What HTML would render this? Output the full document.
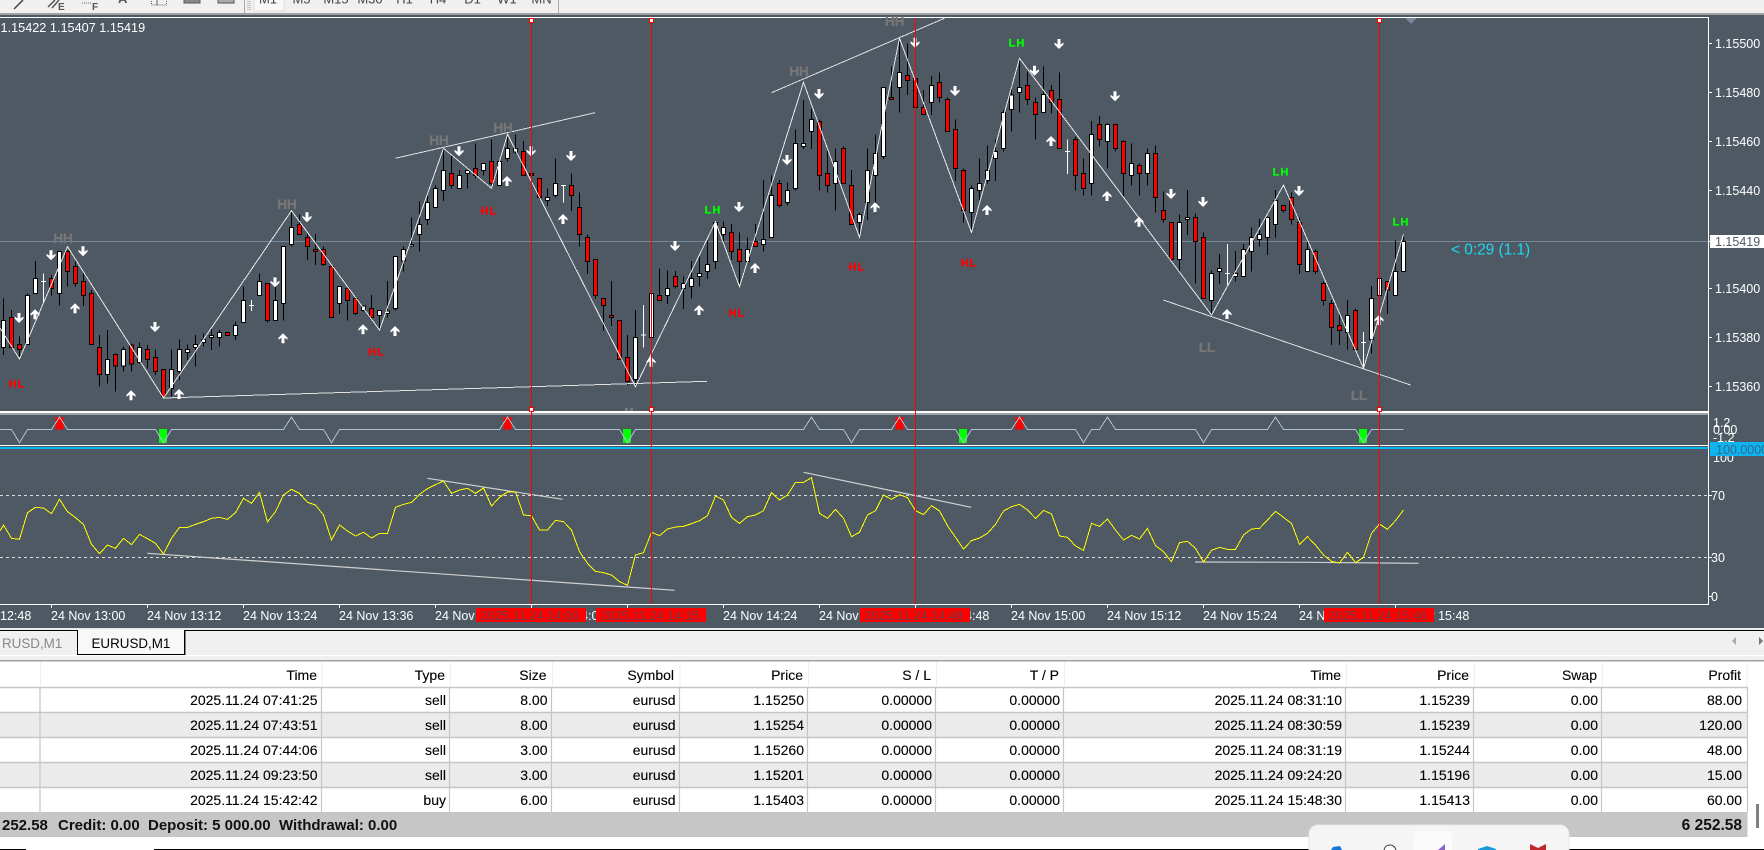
<!DOCTYPE html>
<html><head><meta charset="utf-8"><title>EURUSD,M1</title>
<style>
html,body{margin:0;padding:0;width:1764px;height:850px;overflow:hidden;background:#fff}
svg{display:block;font-family:"Liberation Sans",sans-serif}
.n{vector-effect:non-scaling-stroke}
.ax{font-size:12.5px;fill:#fff}
.tb text{font-size:14px;fill:#000;text-anchor:end;stroke:#000;stroke-width:.12}
.ft{font-size:15px;font-weight:bold;fill:#111}
.lb{font-weight:bold;text-anchor:middle}
.tf{font-size:13px;fill:#444;text-anchor:middle}
</style></head><body>
<svg width="1764" height="850" viewBox="0 0 1764 850" xmlns="http://www.w3.org/2000/svg">
<!-- toolbar -->
<rect width="1764" height="14" fill="#f0f0f0"/>
<rect y="13" width="1764" height="2" fill="#a0a0a0"/>
<path d="M14 9L23 0" stroke="#444" stroke-width="1.5" fill="none"/>
<path d="M48 7L55 0M52 8L59 0" stroke="#555" stroke-width="1.5" fill="none"/>
<text x="58" y="10" font-size="10" font-weight="bold" fill="#555">E</text>
<path d="M82 3H92" stroke="#666" stroke-dasharray="1 1" fill="none"/>
<text x="92" y="10" font-size="10" font-weight="bold" fill="#555">F</text>
<text x="118" y="3" font-size="13" font-weight="bold" fill="#555">A</text>
<rect x="151.5" y="-4" width="15" height="9" fill="none" stroke="#666" stroke-dasharray="1 1"/>
<path d="M157 0V5" stroke="#666"/>
<rect x="184" y="-6" width="16" height="9" fill="#888" stroke="#555"/>
<rect x="218" y="-6" width="16" height="9" fill="#aaa" stroke="#555"/>
<path d="M244.500 0V13M558.500 0V13" stroke="#aaa"/>
<path d="M248 1v10M250 1v10" stroke="#999" stroke-dasharray="1 1"/>
<rect x="254" y="-1" width="30" height="12" fill="#f8f8f8" stroke="#ddd"/>
<g class="tf"><text x="268" y="3.500" class="tf">M1</text><text x="301.500" y="3.500" class="tf">M5</text><text x="336" y="3.500" class="tf">M15</text><text x="370" y="3.500" class="tf">M30</text><text x="404.500" y="3.500" class="tf">H1</text><text x="438" y="3.500" class="tf">H4</text><text x="472.500" y="3.500" class="tf">D1</text><text x="507" y="3.500" class="tf">W1</text><text x="541.500" y="3.500" class="tf">MN</text></g>

<!-- chart bg -->
<rect y="15" width="1764" height="613" fill="#4e5964"/>
<!-- frames -->
<path d="M0 17.500H1708.500V604.500H0M0 445.500H1708.500" fill="none" stroke="#fff" shape-rendering="crispEdges"/>
<rect y="411" width="1708" height="2" fill="#fff"/>
<rect y="413.500" width="1708" height="1" fill="#f0f0f0"/>
<path d="M0 241.500H1708" stroke="#778899" shape-rendering="crispEdges"/>
<path d="M1411 24L1405 18H1417z" fill="#778899"/>

<!-- candles -->
<g transform="scale(1 .33333)" shape-rendering="crispEdges">
<path class="n" fill="none" stroke="#000" d="M3.500 895V1065M11.500 930V1045M19.500 1010V1078M27.500 880V1035M35.500 783V880M51.500 825V887M59.500 755V917M67.500 750V860M75.500 785V860M83.500 820V918M91.500 870V1033M99.500 1005V1160M107.500 990V1150M115.500 1060V1175M123.500 1040V1115M131.500 1030V1115M139.500 1027V1090M147.500 1035V1105M155.500 1048V1125M163.500 1108V1195M171.500 1048V1190M179.500 1018V1140M187.500 1033V1080M195.500 1005V1100M203.500 1000V1040M211.500 985V1050M219.500 990V1040M227.500 997V1006M235.500 966V1020M243.500 860V967M259.500 820V886M267.500 851V968M275.500 830V962M283.500 740V962M291.500 632V740M299.500 643V705M307.500 702V780M315.500 702V795M323.500 740V798M331.500 800V952M339.500 860V942M347.500 862V962M355.500 890V945M363.500 915V935M371.500 885V955M379.500 932V990M387.500 843V952M395.500 770V932M403.500 740V815M411.500 652V738M419.500 605V755M427.500 585V675M435.500 555V622M443.500 445V603M451.500 465V565M459.500 510V565M467.500 510V565M475.500 430V535M483.500 490V527M491.500 418V555M499.500 480V556M507.500 405V485M515.500 403V460M523.500 423V527M531.500 440V540M539.500 535V597M547.500 565V618M555.500 475V593M571.500 520V633M579.500 577V740M587.500 703V822M595.500 779V895M603.500 896V992M611.500 843V978M619.500 962V1078M627.500 1005V1155M635.500 930V1155M659.500 805V902M667.500 812V912M675.500 813V865M683.500 830V927M691.500 783V896M699.500 770V860M707.500 722V837M715.500 665V807M723.500 665V725M731.500 672V780M739.500 697V857M747.500 712V785M755.500 672V740M763.500 540V755M771.500 527V712M779.500 540V623M787.500 548V617M795.500 388V572M803.500 300V447M811.500 327V447M819.500 358V572M827.500 450V578M835.500 445V632M843.500 440V551M851.500 510V673M859.500 637V707M867.500 445V660M875.500 403V640M883.500 263V477M891.500 200V298M899.500 115V338M907.500 130V285M915.500 155V322M923.500 270V344M931.500 228V345M939.500 217V307M947.500 292V394M955.500 358V543M963.500 505V668M971.500 557V695M979.500 475V600M987.500 437V550M995.500 418V543M1003.500 330V455M1011.500 255V395M1019.500 178V338M1027.500 215V315M1035.500 292V418M1043.500 200V338M1051.500 255V340M1059.500 217V445M1075.500 410V572M1083.500 475V587M1091.500 363V587M1099.500 348V440M1107.500 370V505M1115.500 370V455M1123.500 420V590M1131.500 430V557M1139.500 490V587M1147.500 445V557M1155.500 437V638M1163.500 575V668M1171.500 668V778M1179.500 643V818M1187.500 570V705M1195.500 640V850M1203.500 697V895M1211.500 812V945M1219.500 762V852M1235.500 753V845M1243.500 732V829M1251.500 682V815M1259.500 657V740M1267.500 650V765M1275.500 570V713M1283.500 617V638M1291.500 577V673M1299.500 652V822M1307.500 725V814M1315.500 748V822M1323.500 845V917M1331.500 900V1035M1339.500 945V1035M1347.500 900V1048M1355.500 925V1048M1371.500 858V1060M1379.500 836V886M1387.500 845V942M1395.500 722V886M1403.500 703V814"/>
<path class="n" fill="none" stroke="#fff" d="M43.500 820V910M41 845H46M251.500 900V933M249 917H254M563.500 557V608M561 557H566M643.500 915V1043M641 1005H646M1067.500 418V522M1065 455H1070M1227.500 732V855M1225 820H1230M1363.500 996V1100M1361 1027H1366"/>
<path class="n" fill="#fff" stroke="#000" d="M1.500 962h4V1042h-4zM25.500 886h4V1033h-4zM33.500 835h4V880h-4zM57.500 755h4V880h-4zM105.500 1078h4V1123h-4zM121.500 1048h4V1098h-4zM137.500 1042h4V1087h-4zM169.500 1108h4V1165h-4zM177.500 1048h4V1115h-4zM185.500 1048h4V1058h-4zM193.500 1034h4V1042h-4zM201.500 1018h4V1027h-4zM209.500 1006h4V1012h-4zM217.500 997h4V1012h-4zM233.500 976h4V1006h-4zM241.500 902h4V967h-4zM257.500 845h4V886h-4zM273.500 902h4V962h-4zM281.500 740h4V910h-4zM289.500 683h4V733h-4zM337.500 860h4V910h-4zM361.500 918h4V932h-4zM377.500 932h4V946h-4zM385.500 933h4V940h-4zM393.500 770h4V926h-4zM401.500 748h4V783h-4zM409.500 734h4V738h-4zM417.500 674h4V703h-4zM425.500 608h4V658h-4zM433.500 566h4V622h-4zM441.500 512h4V572h-4zM457.500 527h4V565h-4zM465.500 512h4V520h-4zM481.500 490h4V512h-4zM497.500 485h4V556h-4zM505.500 446h4V476h-4zM513.500 446h4V456h-4zM545.500 593h4V601h-4zM553.500 551h4V587h-4zM633.500 1012h4V1138h-4zM649.500 880h4V1012h-4zM665.500 866h4V886h-4zM681.500 851h4V866h-4zM689.500 836h4V860h-4zM697.500 821h4V830h-4zM705.500 794h4V815h-4zM713.500 668h4V785h-4zM721.500 683h4V704h-4zM745.500 748h4V785h-4zM761.500 719h4V733h-4zM769.500 587h4V712h-4zM785.500 572h4V607h-4zM793.500 431h4V566h-4zM801.500 431h4V440h-4zM809.500 358h4V394h-4zM833.500 485h4V551h-4zM857.500 644h4V667h-4zM865.500 512h4V607h-4zM873.500 461h4V527h-4zM881.500 263h4V470h-4zM897.500 218h4V263h-4zM929.500 257h4V307h-4zM969.500 566h4V637h-4zM977.500 551h4V572h-4zM985.500 512h4V541h-4zM993.500 455h4V475h-4zM1001.500 338h4V445h-4zM1009.500 285h4V329h-4zM1017.500 263h4V277h-4zM1041.500 284h4V337h-4zM1089.500 404h4V551h-4zM1105.500 374h4V424h-4zM1129.500 491h4V527h-4zM1145.500 461h4V521h-4zM1177.500 668h4V778h-4zM1185.500 652h4V658h-4zM1209.500 820h4V902h-4zM1217.500 806h4V814h-4zM1233.500 821h4V829h-4zM1241.500 748h4V829h-4zM1249.500 712h4V754h-4zM1257.500 704h4V718h-4zM1265.500 652h4V712h-4zM1273.500 601h4V673h-4zM1305.500 748h4V814h-4zM1345.500 946h4V998h-4zM1369.500 895h4V1018h-4zM1377.500 836h4V886h-4zM1393.500 814h4V886h-4zM1401.500 725h4V814h-4z"/>
<path class="n" fill="#f00" stroke="#000" d="M9.500 952h4V1042h-4zM17.500 1034h4V1048h-4zM49.500 836h4V865h-4zM65.500 755h4V815h-4zM73.500 800h4V850h-4zM81.500 845h4V886h-4zM89.500 880h4V1033h-4zM97.500 1042h4V1123h-4zM113.500 1064h4V1098h-4zM129.500 1035h4V1092h-4zM145.500 1048h4V1078h-4zM153.500 1072h4V1115h-4zM161.500 1108h4V1190h-4zM225.500 997h4V1006h-4zM265.500 851h4V962h-4zM297.500 673h4V704h-4zM305.500 712h4V740h-4zM313.500 748h4V754h-4zM321.500 748h4V794h-4zM329.500 800h4V952h-4zM345.500 866h4V902h-4zM353.500 896h4V940h-4zM369.500 926h4V952h-4zM449.500 521h4V557h-4zM473.500 506h4V527h-4zM489.500 485h4V551h-4zM521.500 455h4V527h-4zM529.500 521h4V527h-4zM537.500 535h4V592h-4zM569.500 557h4V587h-4zM577.500 622h4V704h-4zM585.500 712h4V785h-4zM593.500 779h4V887h-4zM601.500 896h4V917h-4zM609.500 946h4V952h-4zM617.500 962h4V1078h-4zM625.500 1072h4V1144h-4zM657.500 886h4V902h-4zM673.500 830h4V860h-4zM729.500 698h4V754h-4zM737.500 748h4V785h-4zM753.500 725h4V740h-4zM777.500 551h4V617h-4zM817.500 365h4V527h-4zM825.500 521h4V557h-4zM841.500 446h4V551h-4zM849.500 557h4V673h-4zM889.500 292h4V298h-4zM905.500 227h4V241h-4zM913.500 235h4V322h-4zM921.500 323h4V344h-4zM937.500 248h4V292h-4zM945.500 298h4V394h-4zM953.500 388h4V505h-4zM961.500 512h4V632h-4zM1025.500 257h4V298h-4zM1033.500 308h4V344h-4zM1049.500 272h4V308h-4zM1057.500 298h4V445h-4zM1073.500 419h4V527h-4zM1081.500 521h4V565h-4zM1097.500 374h4V418h-4zM1113.500 374h4V445h-4zM1121.500 425h4V521h-4zM1137.500 497h4V521h-4zM1153.500 461h4V592h-4zM1161.500 632h4V658h-4zM1169.500 668h4V778h-4zM1193.500 652h4V725h-4zM1201.500 712h4V895h-4zM1281.500 617h4V632h-4zM1289.500 593h4V658h-4zM1297.500 668h4V793h-4zM1313.500 755h4V815h-4zM1321.500 851h4V901h-4zM1329.500 910h4V982h-4zM1337.500 976h4V991h-4zM1353.500 932h4V1048h-4zM1385.500 845h4V870h-4z"/>
</g>

<!-- zigzag + trendlines -->
<g fill="none" shape-rendering="crispEdges">
<path stroke="#e8e8e8" d="M0 328L19.500 359L67.500 246.700L163.500 398L291.500 210.700L379.500 330L443.500 148.300L491.500 188.300L507.500 134.300L635.500 386.700L715.500 221.700L739.500 286.700L803.500 82.300L859.500 237.300L899.500 38.300L971.500 232.300L1019.500 58.300L1211.500 315L1283.500 185L1363.500 368.300L1403.500 234.300"/>
<path stroke="#e0e0e0" d="M395.300 158.300L595 112.700M163.500 398L707 381.300M771.500 92.700L944.400 18.300M1163.300 300L1410.500 385"/>
</g>

<!-- arrows -->
<g fill="#fff">
<path d="M19 323l4.500-4.500v-2l-3 2v-5.500h-3v5.500l-3-2v2zM51 260.300l4.500-4.500v-2l-3 2v-5.500h-3v5.500l-3-2v2zM83 256.300l4.500-4.500v-2l-3 2v-5.500h-3v5.500l-3-2v2zM155 332l4.500-4.500v-2l-3 2v-5.500h-3v5.500l-3-2v2zM275 287.300l4.500-4.500v-2l-3 2v-5.500h-3v5.500l-3-2v2zM307 222.300l4.500-4.500v-2l-3 2v-5.500h-3v5.500l-3-2v2zM459 156.300l4.500-4.500v-2l-3 2v-5.500h-3v5.500l-3-2v2zM531 156.300l4.500-4.500v-2l-3 2v-5.500h-3v5.500l-3-2v2zM571 161l4.500-4.500v-2l-3 2v-5.500h-3v5.500l-3-2v2zM675 251l4.500-4.500v-2l-3 2v-5.500h-3v5.500l-3-2v2zM739 212l4.500-4.500v-2l-3 2v-5.500h-3v5.500l-3-2v2zM787 165l4.500-4.500v-2l-3 2v-5.500h-3v5.500l-3-2v2zM819 99l4.500-4.500v-2l-3 2v-5.500h-3v5.500l-3-2v2zM915 47.700l4.500-4.500v-2l-3 2v-5.500h-3v5.500l-3-2v2zM955 96l4.500-4.500v-2l-3 2v-5.500h-3v5.500l-3-2v2zM1034.500 75.700l4.500-4.500v-2l-3 2v-5.500h-3v5.500l-3-2v2zM1059 49l4.500-4.500v-2l-3 2v-5.500h-3v5.500l-3-2v2zM1115 101.300l4.500-4.500v-2l-3 2v-5.500h-3v5.500l-3-2v2zM1171 199l4.500-4.500v-2l-3 2v-5.500h-3v5.500l-3-2v2zM1203 207l4.500-4.500v-2l-3 2v-5.500h-3v5.500l-3-2v2zM1299 196l4.500-4.500v-2l-3 2v-5.500h-3v5.500l-3-2v2z"/>
<path d="M35 309.300l4.500 4.500v2l-3-2v5.500h-3v-5.500l-3 2v-2zM75 303.300l4.500 4.500v2l-3-2v5.500h-3v-5.500l-3 2v-2zM131 390.300l4.500 4.500v2l-3-2v5.500h-3v-5.500l-3 2v-2zM179 389l4.500 4.500v2l-3-2v5.500h-3v-5.500l-3 2v-2zM283 333.300l4.500 4.500v2l-3-2v5.500h-3v-5.500l-3 2v-2zM363 324.300l4.500 4.500v2l-3-2v5.500h-3v-5.500l-3 2v-2zM395 326l4.500 4.500v2l-3-2v5.500h-3v-5.500l-3 2v-2zM507 176l4.500 4.500v2l-3-2v5.500h-3v-5.500l-3 2v-2zM563 214l4.500 4.500v2l-3-2v5.500h-3v-5.500l-3 2v-2zM651 356.700l4.500 4.500v2l-3-2v5.500h-3v-5.500l-3 2v-2zM699 305l4.500 4.500v2l-3-2v5.500h-3v-5.500l-3 2v-2zM755 263l4.500 4.500v2l-3-2v5.500h-3v-5.500l-3 2v-2zM875 202.300l4.500 4.500v2l-3-2v5.500h-3v-5.500l-3 2v-2zM987 205l4.500 4.500v2l-3-2v5.500h-3v-5.500l-3 2v-2zM1051 136l4.500 4.500v2l-3-2v5.500h-3v-5.500l-3 2v-2zM1107 191l4.500 4.500v2l-3-2v5.500h-3v-5.500l-3 2v-2zM1139 216.700l4.500 4.500v2l-3-2v5.500h-3v-5.500l-3 2v-2zM1227 309l4.500 4.500v2l-3-2v5.500h-3v-5.500l-3 2v-2zM1379 315l4.500 4.500v2l-3-2v5.500h-3v-5.500l-3 2v-2z"/>
</g>

<!-- labels -->
<g fill="#767676" font-size="13.500" stroke="#767676" stroke-width=".3">
<text x="63" y="243" class="lb">HH</text><text x="287" y="209" class="lb">HH</text><text x="439" y="145" class="lb">HH</text><text x="503" y="132.500" class="lb">HH</text><text x="799" y="76" class="lb">HH</text><text x="894.700" y="26" class="lb">HH</text>
<text x="1207" y="352" class="lb">LL</text><text x="1359" y="400" class="lb">LL</text>
</g>
<g fill="#f00" font-size="11" letter-spacing="1" stroke="#f00" stroke-width=".3">
<text x="17" y="387.500" class="lb">HL</text><text x="376.500" y="355.500" class="lb">HL</text><text x="489" y="214.500" class="lb">HL</text><text x="737" y="316.500" class="lb">HL</text><text x="857" y="270.500" class="lb">HL</text><text x="969" y="266.500" class="lb">HL</text>
</g>
<g fill="#00ff00" font-size="11" letter-spacing="1" stroke="#00ff00" stroke-width=".3">
<text x="713" y="213.500" class="lb">LH</text><text x="1017" y="46.500" class="lb">LH</text><text x="1281" y="175.500" class="lb">LH</text><text x="1401" y="225.500" class="lb">LH</text>
</g>
<rect x="625" y="408" width="3" height="3" fill="#777"/><rect x="630" y="408" width="3" height="3" fill="#777"/>

<text x="0.500" y="32" font-size="12.700" fill="#fff">1.15422 1.15407 1.15419</text>
<text x="1451" y="254.500" font-size="15.400" fill="#1ed6f0">&lt; 0:29 (1.1)</text>

<!-- price axis -->
<path d="M1708 43.500h4M1708 92.500h4M1708 141.500h4M1708 190.500h4M1708 241.500h4M1708 288.500h4M1708 337.500h4M1708 386.500h4M1708 495.500h4M1708 557.500h4M1708 596.500h4" stroke="#fff" shape-rendering="crispEdges"/>
<g class="ax">
<text x="1715" y="48" class="ax">1.15500</text><text x="1715" y="97" class="ax">1.15480</text><text x="1715" y="146" class="ax">1.15460</text><text x="1715" y="195" class="ax">1.15440</text><text x="1715" y="293" class="ax">1.15400</text><text x="1715" y="342" class="ax">1.15380</text><text x="1715" y="391" class="ax">1.15360</text>
<text x="1713" y="427" class="ax">1.2</text><text x="1713" y="434" class="ax">0.00</text><text x="1713" y="442" class="ax">-1.2</text>
<text x="1713" y="462" class="ax">100</text><text x="1711" y="500" class="ax">70</text><text x="1711" y="562" class="ax">30</text><text x="1711" y="601" class="ax">0</text>
</g>
<rect x="1710" y="235" width="54" height="13" fill="#fff"/>
<text x="1715" y="246" font-size="12.500" fill="#4e5964">1.15419</text>

<!-- signal pane -->
<g fill="#f00" shape-rendering="crispEdges"><rect x="55.500" y="417" width="8" height="12.500"/><rect x="503.500" y="417" width="8" height="12.500"/><rect x="895.500" y="417" width="8" height="12.500"/><rect x="1015.500" y="417" width="8" height="12.500"/></g>
<g fill="#00ff00" shape-rendering="crispEdges"><rect x="159" y="429" width="8" height="14"/><rect x="623" y="429" width="8" height="14"/><rect x="959" y="429" width="8" height="14"/><rect x="1359" y="429" width="8" height="14"/></g>
<path fill="none" stroke="#b0c0d4" shape-rendering="crispEdges" d="M0 429.500H11.500L19.500 442.700L27.500 429.500H51.500L59.500 417L67.500 429.500H155.500L163.500 442.700L171.500 429.500H283.500L291.500 417L299.500 429.500H323.500L331.500 442.700L339.500 429.500H499.500L507.500 417L515.500 429.500H619.500L627.500 442.700L635.500 429.500H803.500L811.500 417L819.500 429.500H843.500L851.500 442.700L859.500 429.500H891.500L899.500 417L907.500 429.500H955.500L963.500 442.700L971.500 429.500H1011.500L1019.500 417L1027.500 429.500H1075.500L1083.500 442.700L1091.500 429.500H1099.500L1107.500 417L1115.500 429.500H1195.500L1203.500 442.700L1211.500 429.500H1267.500L1275.500 417L1283.500 429.500H1355.500L1363.500 442.700L1371.500 429.500H1403.500"/>

<!-- RSI pane -->
<path d="M0 495.500H1708M0 557.500H1708" stroke="#dcdcdc" stroke-dasharray="3 3" shape-rendering="crispEdges"/>
<path fill="none" stroke="#d0d0d0" stroke-width="1.200" d="M147.300 553.300L674.600 590.300M427.500 478.300L562.600 499.300M803.600 472.300L971.200 507.300M1195 562L1308 562.300L1418.500 563.300"/>
<g transform="translate(0 410) scale(1 .33333)" shape-rendering="crispEdges">
<polyline class="n" fill="none" stroke="#ffff00" points="0,363 3.5,345 11.5,385 19.5,388 27.5,308 35.5,292 43.5,294 51.5,311 59.5,268 67.5,305 75.5,323 83.5,343 91.5,403 99.5,431 107.5,405 115.5,415 123.5,385 131.5,404 139.5,373 147.5,386 155.5,400 163.5,432 171.5,385 179.5,352 187.5,352 195.5,343 203.5,335 211.5,325 219.5,322 227.5,328 235.5,308 243.5,265 251.5,280 259.5,247 267.5,336 275.5,305 283.5,255 291.5,238 299.5,250 307.5,277 315.5,285 323.5,315 331.5,390 339.5,345 347.5,363 355.5,378 363.5,367 371.5,384 379.5,370 387.5,370 395.5,292 403.5,283 411.5,277 419.5,253 427.5,236 435.5,224 443.5,213 451.5,250 459.5,240 467.5,235 475.5,250 483.5,234 491.5,288 499.5,262 507.5,246 515.5,246 523.5,315 531.5,317 539.5,360 547.5,360 555.5,331 563.5,335 571.5,360 579.5,425 587.5,460 595.5,484 603.5,488 611.5,495 619.5,515 627.5,526 635.5,435 643.5,428 651.5,367 659.5,377 667.5,357 675.5,351 683.5,349 691.5,341 699.5,332 707.5,317 715.5,258 723.5,270 731.5,322 739.5,340 747.5,320 755.5,315 763.5,302 771.5,248 779.5,270 787.5,255 795.5,217 803.5,217 811.5,203 819.5,310 827.5,325 835.5,298 843.5,325 851.5,380 859.5,367 867.5,315 875.5,302 883.5,255 891.5,268 899.5,254 907.5,263 915.5,302 923.5,314 931.5,287 939.5,303 947.5,347 955.5,382 963.5,417 971.5,392 979.5,384 987.5,370 995.5,343 1003.5,303 1011.5,290 1019.5,283 1027.5,300 1035.5,325 1043.5,301 1051.5,312 1059.5,378 1067.5,382 1075.5,408 1083.5,421 1091.5,340 1099.5,349 1107.5,327 1115.5,360 1123.5,390 1131.5,376 1139.5,387 1147.5,355 1155.5,407 1163.5,425 1171.5,455 1179.5,398 1187.5,394 1195.5,415 1203.5,456 1211.5,421 1219.5,412 1227.5,418 1235.5,418 1243.5,375 1251.5,357 1259.5,355 1267.5,330 1275.5,304 1283.5,322 1291.5,340 1299.5,403 1307.5,380 1315.5,405 1323.5,435 1331.5,454 1339.5,459 1347.5,427 1355.5,458 1363.5,442 1371.5,370 1379.5,342 1387.5,358 1395.5,332 1403.5,300"/>
</g>

<!-- red vertical lines + handles -->
<path d="M531.500 18V604M651.500 18V604M915.500 18V604M1379.500 18V604" stroke="#f00" shape-rendering="crispEdges"/>
<rect y="447" width="1708" height="2" fill="#00b4f0"/>
<rect x="1710" y="442" width="54" height="14" fill="#0db4f0"/>
<text x="1716" y="454" font-size="12.500" fill="#35688a">100.0000</text>
<g fill="#fff" stroke="#f00" shape-rendering="crispEdges">
<rect x="529.500" y="18.500" width="4" height="4"/><rect x="529.500" y="407.500" width="4" height="4"/>
<rect x="649.500" y="18.500" width="4" height="4"/><rect x="649.500" y="407.500" width="4" height="4"/>
<rect x="1377.500" y="18.500" width="4" height="4"/><rect x="1377.500" y="407.500" width="4" height="4"/>
</g>

<!-- time axis -->
<path d="M51.500 604v4M147.500 604v4M243.500 604v4M339.500 604v4M435.500 604v4M531.500 604v4M627.500 604v4M723.500 604v4M819.500 604v4M915.500 604v4M1011.500 604v4M1107.500 604v4M1203.500 604v4M1299.500 604v4M1395.500 604v4" stroke="#fff" shape-rendering="crispEdges"/>
<g class="ax">
<text x="0" y="620" class="ax">12:48</text>
<text x="51" y="620" class="ax">24 Nov 13:00</text><text x="147" y="620" class="ax">24 Nov 13:12</text><text x="243" y="620" class="ax">24 Nov 13:24</text><text x="339" y="620" class="ax">24 Nov 13:36</text><text x="435" y="620" class="ax">24 Nov 13:48</text><text x="531" y="620" class="ax">24 Nov 14:00</text><text x="627" y="620" class="ax">24 Nov 14:12</text><text x="723" y="620" class="ax">24 Nov 14:24</text><text x="819" y="620" class="ax">24 Nov 14:36</text><text x="915" y="620" class="ax">24 Nov 14:48</text><text x="1011" y="620" class="ax">24 Nov 15:00</text><text x="1107" y="620" class="ax">24 Nov 15:12</text><text x="1203" y="620" class="ax">24 Nov 15:24</text><text x="1299" y="620" class="ax">24 Nov 15:36</text><text x="1395" y="620" class="ax">24 Nov 15:48</text>
</g>
<g fill="#f00" shape-rendering="crispEdges"><rect x="476" y="608" width="110" height="14"/><rect x="596" y="608" width="110" height="14"/><rect x="860" y="608" width="110" height="14"/><rect x="1324" y="608" width="110" height="14"/></g>
<g font-size="12.800" fill="#6a3a40">
<text x="480.500" y="620">2025.11.24 14:00</text><text x="600.500" y="620">2025.11.24 14:15</text><text x="864.500" y="620">2025.11.24 14:48</text><text x="1328.500" y="620">2025.11.24 15:46</text>
</g>

<!-- tabs -->
<rect y="628" width="1764" height="1" fill="#e8e8e8"/>
<rect y="629" width="1764" height="32" fill="#f0f0f0"/>
<rect y="630" width="1764" height="1" fill="#000"/>
<rect y="655" width="1764" height="1" fill="#fff"/>
<path d="M77.500 630V654.500H184.500V630" fill="#f8f8f8" stroke="#000" shape-rendering="crispEdges"/>
<rect x="185" y="631" width="1" height="24" fill="#888"/>
<text x="2" y="648" font-size="13.400" fill="#888">RUSD,M1</text>
<text x="91.500" y="648" font-size="13.400" fill="#000">EURUSD,M1</text>
<path d="M1732 641l4-4v8z" fill="#aaa"/>
<path d="M1763 641l-4-4v8z" fill="#777"/>

<!-- table -->
<rect y="660" width="1764" height="190" fill="#fff"/>
<rect y="660" width="1764" height="1.500" fill="#a0a0a0"/>
<g fill="#ebebeb"><rect y="713" width="1748" height="24"/><rect y="763" width="1748" height="24"/></g>
<path d="M0 687.500H1748M0 712.500H1748M0 737.500H1748M0 762.500H1748M0 787.500H1748" stroke="#c6c6c6" stroke-width="1.500"/>
<path d="M40 688V812M321.500 688V812M449.500 688V812M551.500 688V812M679.500 688V812M807.500 688V812M935.500 688V812M1063.500 688V812M1345.500 688V812M1473.500 688V812M1601.500 688V812M1747.500 688V812" stroke="#c6c6c6" stroke-width="1.200"/>
<path d="M40.500 662V687M322 662V687M450.500 662V687M552.500 662V687M680 662V687M808.500 662V687M936.500 662V687M1064.500 662V687M1346.500 662V687M1474.500 662V687M1602.500 662V687M1747 662V687" stroke="#eee"/>
<g class="tb">
<text x="317" y="680">Time</text><text x="445" y="680">Type</text><text x="546.500" y="680">Size</text><text x="674" y="680">Symbol</text><text x="803" y="680">Price</text><text x="931" y="680">S / L</text><text x="1059" y="680">T / P</text><text x="1341" y="680">Time</text><text x="1469" y="680">Price</text><text x="1597" y="680">Swap</text><text x="1741" y="680">Profit</text>

<text x="317.500" y="705">2025.11.24 07:41:25</text><text x="446" y="705">sell</text><text x="547.500" y="705">8.00</text><text x="675.500" y="705">eurusd</text><text x="804" y="705">1.15250</text><text x="932" y="705">0.00000</text><text x="1060" y="705">0.00000</text><text x="1342" y="705">2025.11.24 08:31:10</text><text x="1470" y="705">1.15239</text><text x="1598" y="705">0.00</text><text x="1742" y="705">88.00</text>

<text x="317.500" y="730">2025.11.24 07:43:51</text><text x="446" y="730">sell</text><text x="547.500" y="730">8.00</text><text x="675.500" y="730">eurusd</text><text x="804" y="730">1.15254</text><text x="932" y="730">0.00000</text><text x="1060" y="730">0.00000</text><text x="1342" y="730">2025.11.24 08:30:59</text><text x="1470" y="730">1.15239</text><text x="1598" y="730">0.00</text><text x="1742" y="730">120.00</text>

<text x="317.500" y="755">2025.11.24 07:44:06</text><text x="446" y="755">sell</text><text x="547.500" y="755">3.00</text><text x="675.500" y="755">eurusd</text><text x="804" y="755">1.15260</text><text x="932" y="755">0.00000</text><text x="1060" y="755">0.00000</text><text x="1342" y="755">2025.11.24 08:31:19</text><text x="1470" y="755">1.15244</text><text x="1598" y="755">0.00</text><text x="1742" y="755">48.00</text>

<text x="317.500" y="780">2025.11.24 09:23:50</text><text x="446" y="780">sell</text><text x="547.500" y="780">3.00</text><text x="675.500" y="780">eurusd</text><text x="804" y="780">1.15201</text><text x="932" y="780">0.00000</text><text x="1060" y="780">0.00000</text><text x="1342" y="780">2025.11.24 09:24:20</text><text x="1470" y="780">1.15196</text><text x="1598" y="780">0.00</text><text x="1742" y="780">15.00</text>

<text x="317.500" y="805">2025.11.24 15:42:42</text><text x="446" y="805">buy</text><text x="547.500" y="805">6.00</text><text x="675.500" y="805">eurusd</text><text x="804" y="805">1.15403</text><text x="932" y="805">0.00000</text><text x="1060" y="805">0.00000</text><text x="1342" y="805">2025.11.24 15:48:30</text><text x="1470" y="805">1.15413</text><text x="1598" y="805">0.00</text><text x="1742" y="805">60.00</text>
</g>
<rect y="812" width="1747.500" height="25" fill="#c6c6c6"/>
<g class="ft">
<text x="2" y="830" class="ft" font-size="14">252.58</text><text x="58" y="830" class="ft">Credit: 0.00</text><text x="148" y="830" class="ft">Deposit: 5 000.00</text><text x="279" y="830" class="ft">Withdrawal: 0.00</text>
<text x="1742" y="830" class="ft" text-anchor="end" style="font-size:15.500px">6 252.58</text>
</g>
<rect x="1756" y="804" width="3" height="24" fill="#808080"/>
<path d="M0 849.500H26M154 849.500H1764" stroke="#000" shape-rendering="crispEdges"/>

<!-- taskbar popup -->
<rect x="1309" y="825" width="260" height="40" rx="9" fill="#f5f5f5" stroke="#e6e6e6"/>
<rect x="1414" y="831" width="38" height="30" rx="4" fill="#fbfbfb"/>
<path d="M1331 850l2-3 7-1 2 4z" fill="#1677d8"/>
<path d="M1384 850c1-4 3-5 6-5s5 2 6 5" fill="#fff" stroke="#333"/>
<path d="M1438 850l7-6v6z" fill="#8b63c9"/>
<path d="M1478 849l9-3 9 3v1h-18z" fill="#1a9ad6"/>
<path d="M1530 850v-6l8 4 8-4v6z" fill="#c0282d"/>
</svg>
</body></html>
